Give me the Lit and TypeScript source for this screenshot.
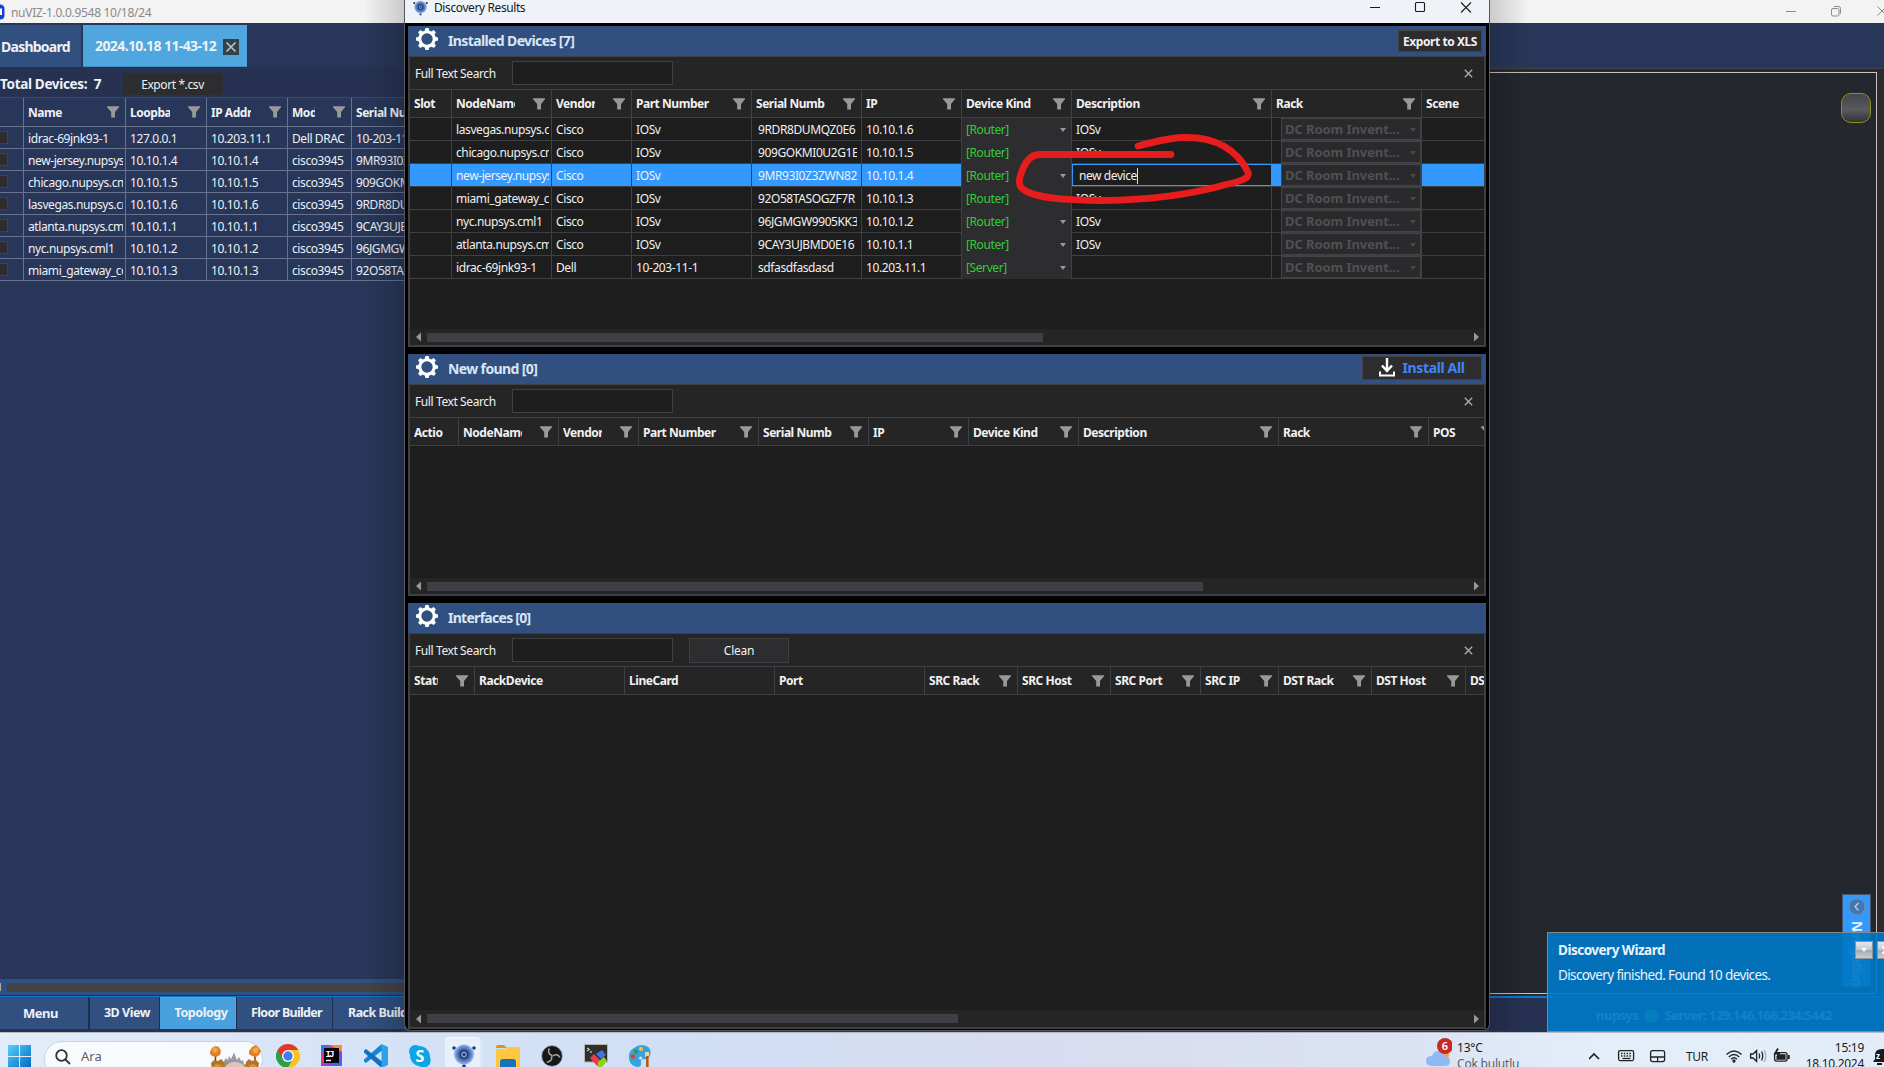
import { LitElement, html, css, svg, nothing } from "lit";
import { customElement, property } from "lit/decorators.js";
import { styleMap } from "lit/directives/style-map.js";
import { classMap } from "lit/directives/class-map.js";

type Col = { label: string; w: number; filter?: boolean };

const tracks = (cols: Col[]) =>
  styleMap({ gridTemplateColumns: cols.map((c) => `${c.w}px`).join(" ") });

const funnel = html`<svg class="funnel" width="12" height="12" viewBox="0 0 12 12">
  <path d="M0 .3H12V1.2L8 6V11.6H4.2V6L0 1.2Z" fill="#999"/></svg>`;

const headerCells = (cols: Col[]) => cols.map(
  (c) => html`<div class="hcell ${c.filter ? "" : "plain"}"><span class="hlabel">${c.label}</span>${c.filter ? funnel : nothing}</div>`
);

const gridCss = css`
  .hrow, .row { display: grid; }
  .hcell { display: flex; align-items: center; min-width: 0; box-sizing: border-box; border-right: 1px solid var(--line);
    padding: 0 6px 0 4px; font-weight: 700; font-size: 12px; }
  .hcell.plain { padding-right: 15px; }
  .hcell:last-child { border-right: 0; }
  .hlabel { flex: 1; min-width: 0; overflow: hidden; white-space: nowrap; margin-right: 18px; letter-spacing: -0.46px; }
  .hcell.plain .hlabel { margin-right: 0; }
  .funnel { flex: none; display: block; }
  .cell { box-sizing: border-box; border-right: 1px solid var(--line); min-width: 0; padding: 2px 2px 0 4px; display: flex; align-items: center; }
  .cell:last-child { border-right: 0; }
  .cell > span { overflow: hidden; white-space: nowrap; min-width: 0; letter-spacing: -0.4px; padding-right: 1px; }
`;

const LEFT_COLS: Col[] = [
  { label: "", w: 24 }, { label: "Name", w: 102, filter: true }, { label: "Loopback", w: 81, filter: true },
  { label: "IP Address", w: 81, filter: true }, { label: "Model", w: 64, filter: true }, { label: "Serial Number", w: 110 },
];
const LEFT_ROWS = [
  ["idrac-69jnk93-1", "127.0.0.1", "10.203.11.1", "Dell DRAC", "10-203-11-1"],
  ["new-jersey.nupsys.cml1", "10.10.1.4", "10.10.1.4", "cisco3945", "9MR93I0Z3ZWN82"],
  ["chicago.nupsys.cml1", "10.10.1.5", "10.10.1.5", "cisco3945", "909GOKMI0U2G1E"],
  ["lasvegas.nupsys.cml1", "10.10.1.6", "10.10.1.6", "cisco3945", "9RDR8DUMQZ0E6"],
  ["atlanta.nupsys.cml1", "10.10.1.1", "10.10.1.1", "cisco3945", "9CAY3UJBMD0E16"],
  ["nyc.nupsys.cml1", "10.10.1.2", "10.10.1.2", "cisco3945", "96JGMGW9905KK3"],
  ["miami_gateway_core", "10.10.1.3", "10.10.1.3", "cisco3945", "92O58TASOGZF7R"],
];

@customElement("nv-main-window")
class MainWindow extends LitElement {
  static styles = [gridCss, css`
    :host { display: flex; flex-direction: column; height: 1032px; background: #283759; color: #eef1f5; --line: #68728c; }
    .title { height: 23px; flex: none; background: #f3f3f3; display: flex; align-items: center; color: #8a8a8a; }
    .title .logo { display: block; width: 6px; height: 18px; margin-right: 5px; }
    .title .name { font-size: 12px; letter-spacing: -.3px; flex: 1; padding-top: 2px; }
    .title svg { display: block; }
    .body { flex: 1; min-height: 0; display: flex; }
    .left { width: 406px; flex: none; overflow: hidden; display: flex; flex-direction: column; }
    .tabs { display: flex; flex: none; height: 42px; padding: 2px 0 0; gap: 2px; font-size: 14px; font-weight: 700; letter-spacing: -.62px; }
    .tab { display: flex; align-items: center; background: #31507f; width: 81px; height: 42px; box-sizing: border-box; white-space: nowrap; padding: 2px 0 0 1px; letter-spacing: -.75px; }
    .tab.active { background: #50a6df; width: 164px; padding-left: 12px; gap: 7px; border-bottom: 1px solid #3f8fc7; letter-spacing: -.6px; }
    .tab.active span { flex: none; width: 121px; }
    .tools { flex: none; height: 31px; display: flex; align-items: center; background: #273253; font-weight: 700; font-size: 13.5px; border-bottom: 1px solid #46494f; box-sizing: border-box; padding-top: 4px; }
    .tools .total { width: 123px; white-space: pre; letter-spacing: -.32px; padding-top: 2px; }
    .tools .btn { background: #2d2d30; width: 100px; height: 22px; box-sizing: border-box; display: flex; align-items: center; justify-content: center; font-weight: 400; font-size: 12px; letter-spacing: -.4px; padding: 2px 1px 0 0; }
    .hrow { flex: none; height: 29px; border-bottom: 1px solid var(--line); box-sizing: border-box; }
    .hlabel { padding-top: 2px; }
    .row { flex: none; height: 22px; box-sizing: border-box; border-bottom: 1px solid var(--line); font-size: 12px; }
    .cell.check { padding: 0; }
    .box { width: 7px; height: 11px; background: #2d2d30; border: 1px solid #434346; border-left: 0; margin-bottom: 1px; }
    .fill { flex: 1; }
    .hscroll { height: 16px; background: #31507f; display: flex; align-items: center; gap: 6px; border-bottom: 1px solid #20304f; }
    .hscroll i { width: 1px; height: 8px; background: #aaa; }
    .hscroll b { flex: 1; height: 9px; background: #434346; }
    .nav { flex: none; border-top: 1px solid #0a7acc; height: 36px; display: flex; gap: 1px; background: #1f2f50; font-size: 12.5px; font-weight: 700; box-sizing: border-box; border-bottom: 3px solid #263355; letter-spacing: -.45px; }
    .nav div { flex: none; background: #31507f; display: flex; align-items: center; justify-content: center; box-sizing: border-box; white-space: nowrap; padding-bottom: 0; }
    .nav .menu { width: 88px; padding-right: 7px; margin-right: 1px; padding-top: 1px; font-size: 13px; }
    .nav .v3d { width: 69px; padding-left: 5px; }
    .nav .topo { width: 76px; background: #48a1dc; padding-left: 6px; }
    .nav .floor { width: 95px; padding-left: 4px; letter-spacing: -.7px; }
    .nav .rack { width: 90px; justify-content: flex-start; padding-left: 15px; letter-spacing: -.55px; }
    .right { margin-left: auto; width: 395px; display: flex; flex-direction: column; }
    .strip { height: 45px; }
    .scene { flex: 1; background: #2b2b2d; border-top: 1px solid #444448; padding: 3px 7px 2px 0; display: flex; }
    .canvas { flex: 1; background: #24272e; border: 1px solid #c4c2bf; border-left: 0; display: flex; flex-direction: column; align-items: flex-end; padding: 20px 5px 6px 0; justify-content: space-between; }
    .knob { width: 28px; height: 28px; border-radius: 10px; border: 1px solid #8f8f1c; background: linear-gradient(#434447, #5a5b60 55%, #323337); }
    .dock { width: 27px; height: 91px; background: #3399ff; border: 1px solid #46566b; display: flex; flex-direction: column; align-items: center; color: #e8f2ff; }
    .dock svg { margin-top: 3px; }
    .dock span { writing-mode: vertical-rl; font-size: 13.5px; font-weight: 700; margin-top: 6px; letter-spacing: -1px; line-height: 20px; }
    .status { height: 36px; border-top: 2px solid #0a7acc; background: #273253; display: flex; align-items: center; justify-content: flex-end; font-size: 13px; font-weight: 700; padding: 1px 52px 0 0; box-sizing: border-box; gap: 6px; letter-spacing: -.53px; }
    .dot { width: 14px; height: 14px; border-radius: 50%; background: #39c75a; }
  `];
  render() {
    return html`
      <div class="title">
        <svg class="logo" viewBox="0 0 6 18"><path d="M0 1.500C3 1.500 4.500 3 4.500 6v6c0 3-1.500 4.500-4.500 4.500" fill="#1443d8"/><path d="M0 5.500h2v6.500H0" fill="#fff"/></svg>
        <span class="name">nuVIZ-1.0.0.9548 10/18/24</span>
        <svg width="98" height="22" viewBox="1786 0 98 22" fill="none" stroke="#8a8a8a"><path d="M1786 10.500h10M1877.500 5.500l9 9M1877.500 14.500l9-9"/><rect x="1831.500" y="7.500" width="7.500" height="7.500" rx="1.500"/><path d="M1834 5.500h4.500a2 2 0 0 1 2 2V12.500"/></svg>
      </div>
      <div class="body">
        <div class="left">
          <div class="tabs">
            <div class="tab">Dashboard</div>
            <div class="tab active"><span>2024.10.18 11-43-12</span>
              <svg width="16" height="16" viewBox="0 0 16 16"><rect width="16" height="16" fill="#34404b"/><path d="M3.500 3.500l9 9M12.500 3.500l-9 9" stroke="#b9c0c6" stroke-width="1.700"/></svg>
            </div>
          </div>
          <div class="tools"><span class="total">Total Devices:  7</span><span class="btn">Export *.csv</span></div>
          <div class="hrow" style=${tracks(LEFT_COLS)}>${headerCells(LEFT_COLS)}</div>
          ${LEFT_ROWS.map((r) => html`<div class="row" style=${tracks(LEFT_COLS)}>
            <div class="cell check"><i class="box"></i></div>
            ${r.map((c) => html`<div class="cell"><span>${c}</span></div>`)}
          </div>`)}
          <div class="fill"></div>
          <div class="hscroll"><i></i><b></b></div>
          <div class="nav"><div class="menu">Menu</div><div class="v3d">3D View</div><div class="topo">Topology</div><div class="floor">Floor Builder</div><div class="rack">Rack Builder</div></div>
        </div>
        <div class="right">
          <div class="strip"></div>
          <div class="scene"><div class="canvas">
            <div class="knob"></div>
            <div class="dock">
              <svg width="18" height="18" viewBox="0 0 18 18"><circle cx="9" cy="9" r="8.300" fill="#4377b3" stroke="#7b8ca0"/><path d="M10.500 5.200L7 9l3.500 3.800" fill="none" stroke="#c8d4e2" stroke-width="1.300"/></svg>
              <span>Navigation</span>
            </div>
          </div></div>
          <div class="status"><span>nupsys</span><i class="dot"></i><span>Server: 129.146.166.234:5442</span></div>
        </div>
      </div>`;
  }
}

const f = (label: string, w: number): Col => ({ label, w, filter: true });
const p = (label: string, w: number): Col => ({ label, w });
const COLS1 = [p("Slot", 42), f("NodeName", 100), f("Vendor", 80), f("Part Number", 120), f("Serial Number", 110), f("IP", 100), f("Device Kind", 110), f("Description", 200), f("Rack", 150), p("Scene", 62)];
const COLS2 = [p("Action", 49), f("NodeName", 100), f("Vendor", 80), f("Part Number", 120), f("Serial Number", 110), f("IP", 100), f("Device Kind", 110), f("Description", 200), f("Rack", 150), f("POS", 70)];
const COLS3 = [f("Status", 65), p("RackDevice", 150), p("LineCard", 150), p("Port", 150), f("SRC Rack", 93), f("SRC Host", 93), f("SRC Port", 90), f("SRC IP", 78), f("DST Rack", 93), f("DST Host", 94), p("DST Port", 80)];

const DEVICES = [
  ["lasvegas.nupsys.cml1", "Cisco", "IOSv", "9RDR8DUMQZ0E6", "10.10.1.6", "[Router]", "IOSv"],
  ["chicago.nupsys.cml1", "Cisco", "IOSv", "909GOKMI0U2G1E", "10.10.1.5", "[Router]", "IOSv"],
  ["new-jersey.nupsys.cml1", "Cisco", "IOSv", "9MR93I0Z3ZWN82", "10.10.1.4", "[Router]", "new device"],
  ["miami_gateway_core", "Cisco", "IOSv", "92O58TASOGZF7R", "10.10.1.3", "[Router]", "IOSv"],
  ["nyc.nupsys.cml1", "Cisco", "IOSv", "96JGMGW9905KK3", "10.10.1.2", "[Router]", "IOSv"],
  ["atlanta.nupsys.cml1", "Cisco", "IOSv", "9CAY3UJBMD0E16", "10.10.1.1", "[Router]", "IOSv"],
  ["idrac-69jnk93-1", "Dell", "10-203-11-1", "sdfasdfasdasd", "10.203.11.1", "[Server]", ""],
];
const EDITED = 2;

@customElement("nv-panel")
class Panel extends LitElement {
  @property() heading = "";
  @property({ reflect: true }) kind = "";
  @property({ attribute: false }) cols: Col[] = [];
  @property({ attribute: false }) rows: string[][] = [];
  @property({ type: Number }) thumb = 0;

  static styles = [gridCss, css`
    :host { display: flex; flex-direction: column; width: 1078px; --line: #3f3f46; color: #f1f1f1; }
    .head { height: 30px; flex: none; background: #31507f; display: flex; align-items: center; padding: 0 4px 0 8px; color: #d9e6f4; font-weight: 700; font-size: 14px; letter-spacing: -.62px; }
    .head .gear { display: block; margin: -4px 10px 0 0; }
    .head .h { flex: 1; padding-top: 1px; }
    :host([kind="interfaces"]) .h { letter-spacing: -.72px; padding-top: 0; }
    .xls { box-sizing: border-box; width: 84px; height: 22px; border: 1px solid #434346; background: #2d2d30; color: #f1f1f1; font-size: 12px; display: flex; align-items: center; justify-content: center; white-space: nowrap; padding-top: 1px; letter-spacing: -.42px; }
    .inst { box-sizing: border-box; width: 120px; height: 24px; border: 1px solid #434346; background: #2d2d30; color: #3f86f4; font-size: 14px; display: flex; align-items: center; justify-content: center; gap: 7px; white-space: nowrap; margin-top: -2px; letter-spacing: -.35px; padding-top: 1px; }
    .inst svg { margin-top: -2px; }
    .frame { flex: 1; min-height: 0; display: flex; flex-direction: column; border: 2px solid #3f3f46; border-top-width: 1px; background: #1e1e1e; overflow: hidden; }
    .search { height: 32px; flex: none; background: #252526; display: flex; align-items: center; padding: 0 11px 0 5px; font-size: 12px; border-bottom: 1px solid var(--line); letter-spacing: -.4px; }
    .search .lbl { width: 97px; padding-top: 1px; }
    .input { width: 159px; height: 22px; border: 1px solid #3f3f46; background: #1e1e1e; }
    .clean { width: 98px; height: 22px; border: 1px solid #3f3f46; background: #2d2d30; display: flex; align-items: center; justify-content: center; margin-left: 16px; letter-spacing: -.25px; padding-top: 1px; }
    .x { margin-left: auto; }
    .hrow { flex: none; height: 28px; box-sizing: border-box; border-bottom: 1px solid var(--line); background: #252526; }
    :host([kind="found"]) .hlabel { padding-top: 2px; }
    .row { flex: none; height: 23px; box-sizing: border-box; border-bottom: 1px solid var(--line); font-size: 12px; }
    .row.sel { background: #3399ff; }
    .cell.serial { padding-left: 6px; padding-right: 4px; }
    .kind { background: #2d2d30; color: #32cd32; justify-content: space-between; padding-right: 5px; margin-bottom: -1px; border-right-color: #3f3f46; padding-top: 1px; }
    .rack { padding: 0 0 0 9px; }
    .combo { flex: 1; box-sizing: border-box; height: 22px; border: 1px solid #434346; background: #2a2a2c; color: #505053; font-weight: 700; font-size: 13px; display: flex; align-items: center; justify-content: space-between; padding: 1px 4px 0 3px; }
    .combo span { letter-spacing: -.08px; white-space: nowrap; }
    .edit { align-self: stretch; flex: 1; background: #1e1e1e; border: 1px solid #3399ff; display: flex; align-items: center; padding: 1px 0 0 6px; box-sizing: border-box; letter-spacing: -.42px; }
    .edit i { width: 1px; height: 16px; background: #ddd; }
    .cell.editing { padding: 0; border-right: 0; }
    .fill { flex: 1; }
    .hscroll { height: 16px; flex: none; background: #252526; display: flex; align-items: center; padding: 0 5px 0 6px; }
    :host([kind="interfaces"]) .hscroll { height: 17px; }
    .bar { height: 9px; background: #3f3f46; margin-left: 6px; }
    .hscroll svg { display: block; }
    .hscroll .r { margin-left: auto; }
  `];

  private caret(color: string) {
    return html`<svg width="6" height="4" viewBox="0 0 6 4"><path d="M0 0H6L3 4Z" fill=${color}/></svg>`;
  }
  private row(r: string[], i: number) {
    const sel = i === EDITED;
    return html`<div class=${classMap({ row: true, sel })} style=${tracks(this.cols)}>
      <div class="cell"></div>
      ${r.slice(0, 5).map((c, n) => html`<div class="cell ${n === 3 ? "serial" : ""}"><span>${c}</span></div>`)}
      <div class="cell kind"><span>${r[5]}</span>${this.caret("#999")}</div>
      ${sel ? html`<div class="cell editing"><div class="edit">${r[6]}<i></i></div></div>` : html`<div class="cell"><span>${r[6]}</span></div>`}
      <div class="cell rack"><div class="combo"><span>DC Room Invent...</span>${this.caret("#48484b")}</div></div>
      <div class="cell"></div>
    </div>`;
  }
  render() {
    const teeth = [0, 45, 90, 135, 180, 225, 270, 315];
    return html`
      <div class="head">
        <svg class="gear" width="22" height="22" viewBox="0 0 22 22"><circle cx="11" cy="11" r="7.200" fill="none" stroke="#fff" stroke-width="3"/>${teeth.map((a) => svg`<path d="M8.700 3L9.400 0H12.600L13.300 3Z" fill="#fff" transform="rotate(${a} 11 11)"/>`)}</svg>
        <span class="h">${this.heading}</span>
        ${this.kind === "installed" ? html`<div class="xls">Export to XLS</div>` : nothing}
        ${this.kind === "found" ? html`<div class="inst"><svg width="16" height="19" viewBox="0 0 16 19" fill="none" stroke="#fff"><path d="M8 0V12M3 7.500L8 13L13 7.500" stroke-width="2.400"/><path d="M1 13.500V17.500H15V13.500" stroke-width="2"/></svg>Install All</div>` : nothing}
      </div>
      <div class="frame">
        <div class="search"><span class="lbl">Full Text Search</span><div class="input"></div>
          ${this.kind === "interfaces" ? html`<div class="clean">Clean</div>` : nothing}
          <svg class="x" width="9" height="9" viewBox="0 0 9 9"><path d="M.8.8l7.400 7.400M8.200.8L.8 8.200" stroke="#aaa" stroke-width="1.400"/></svg></div>
        <div class="hrow" style=${tracks(this.cols)}>${headerCells(this.cols)}</div>
        ${this.rows.map((r, i) => this.row(r, i))}
        <div class="fill"></div>
        <div class="hscroll"><svg width="5" height="10" viewBox="0 0 5 10"><path d="M5 .5V9.500L0 5Z" fill="#999"/></svg>
          <div class="bar" style=${styleMap({ width: `${this.thumb}px` })}></div>
          <svg class="r" width="5" height="10" viewBox="0 0 5 10"><path d="M0 .5V9.500L5 5Z" fill="#999"/></svg></div>
      </div>`;
  }
}

const orb = svg`<circle cx="2" cy="4" r="1.800" fill="#22407f"/><circle cx="22" cy="4" r="1.800" fill="#22407f"/><circle cx="12" cy="22" r="1.800" fill="#22407f"/>
  <circle cx="12" cy="10.500" r="10" fill="#86abea"/><circle cx="12" cy="10.500" r="8.200" fill="#6285c6"/><circle cx="12" cy="10.500" r="6" fill="#3a5a98"/><circle cx="12" cy="10.500" r="4" fill="#233d73"/><circle cx="12" cy="10.500" r="2.300" fill="#27457f" stroke="#a9c6f5" stroke-width="1"/>`;

@customElement("nv-dialog")
class Dialog extends LitElement {
  static styles = css`
    :host { display: flex; flex-direction: column; width: 1086px; height: 1031px; box-sizing: border-box; border: 1px solid #55575c; border-top: 0; border-radius: 0 0 7px 7px; background: #000; overflow: hidden; }
    .title { height: 23px; flex: none; background: #eff3f7; display: flex; align-items: center; color: #1a1a1a; font-size: 12px; letter-spacing: -.4px; padding-left: 8px; }
    .title .ico { display: block; margin-right: 6px; margin-top: -7px; }
    .title span { flex: 1; margin-top: -7px; }
    .stack { display: flex; flex-direction: column; padding: 3px 0 0 3px; gap: 7px; }
    .a { height: 321px; } .b { height: 242px; } .c { height: 426px; }
  `;
  render() {
    return html`
      <div class="title">
        <svg class="ico" width="15" height="16" viewBox="0 0 24 24">${orb}</svg>
        <span>Discovery Results</span>
        <svg width="119" height="23" viewBox="1370 0 119 23" fill="none" stroke="#1a1a1a" stroke-width="1.100"><path d="M1370 7.500h10M1461 2.500l10 10M1461 12.500l10-10"/><rect x="1415.500" y="2.500" width="9" height="9" rx="1"/></svg>
      </div>
      <div class="stack">
        <nv-panel class="a" kind="installed" heading="Installed Devices [7]" .cols=${COLS1} .rows=${DEVICES} thumb="616"></nv-panel>
        <nv-panel class="b" kind="found" heading="New found [0]" .cols=${COLS2} thumb="776"></nv-panel>
        <nv-panel class="c" kind="interfaces" heading="Interfaces [0]" .cols=${COLS3} thumb="531"></nv-panel>
      </div>`;
  }
}

@customElement("nv-toast")
class Toast extends LitElement {
  static styles = css`
    :host { display: flex; box-sizing: border-box; width: 350px; height: 100px; border: 1px solid #7d8790; border-right: 0; background: rgba(0, 119, 198, .92); color: #eaf3fb; padding: 8px 0 0 10px; }
    .text { flex: 1; display: flex; flex-direction: column; gap: 6px; font-size: 13.5px; line-height: 19px; white-space: nowrap; letter-spacing: -.62px; }
    .text b { font-weight: 700; letter-spacing: -.5px; }
    .btns { display: flex; gap: 4px; width: 42px; }
    .btns i { flex: none; width: 16px; height: 16px; border: 1px solid #8c9399; background: linear-gradient(#e4e8ec, #c2c8cf 50%, #a3acb5 52%, #c9ced3); display: flex; align-items: center; justify-content: center; }
  `;
  render() {
    return html`<div class="text"><b>Discovery Wizard</b><span>Discovery finished. Found 10 devices.</span></div>
      <div class="btns"><i><svg width="6" height="4"><path d="M0 0H6L3 4Z" fill="#fff"/></svg></i><i><svg width="8" height="8"><path d="M0 0L8 8M8 0L0 8" stroke="#fff" stroke-width="2"/></svg></i></div>`;
  }
}

@customElement("nv-taskbar")
class Taskbar extends LitElement {
  static styles = css`
    :host { display: flex; height: 35px; box-sizing: border-box; border-top: 1px solid #b4b8c0; overflow: hidden; color: #1b1b1b; align-items: flex-start;
      background: linear-gradient(90deg, #e2edf9, #d5e2f6 22%, #d0dff5 36%, #d8dcf0 55%, #dbe3f3 75%, #e4eef9 85%, #e3edf8); }
    svg { display: block; flex: none; }
    .win { margin: 12px 0 0 8px; }
    .search { margin: 8px 0 0 13px; width: 219px; height: 36px; box-sizing: border-box; border: 1px solid #c9d3df; border-radius: 18px; background: #f8fbfe; display: flex; flex: none; font-size: 13px; color: #5a5d61; }
    .search .m { margin: 7px 10px 0 10px; }
    .search span { flex: 1; margin-top: 6px; }
    .search .trees { margin: 3px 1px 0 0; }
    .apps { display: flex; margin: 4px 0 0 3px; height: 44px; }
    .app { width: 44px; box-sizing: border-box; display: flex; justify-content: center; padding-top: 7px; flex: none; }
    .app.on { background: #eaf0fb; border-radius: 4px; width: 35px; margin: 0 6px 0 3px; box-shadow: 3px 0 0 -1px #dfe7f5; border-top: 1px solid #f4f7fc; padding: 6px 0 0 3px; }
    .tray { margin-left: auto; display: flex; align-items: flex-start; font-size: 12px; line-height: 16px; }
    .weather { display: flex; gap: 5px; }
    .weather div { width: 132px; margin-top: 7px; letter-spacing: -.2px; }
    .weather small { font-size: 12px; display: block; color: #5d6066; }
    .lang { font-size: 12px; width: 40px; margin-top: 16px; letter-spacing: -.4px; }
    .clock { text-align: right; width: 74px; margin-top: 7px; letter-spacing: -.3px; }
    .bell { margin-left: 8px; }
  `;
  render() {
    return html`
      <svg class="win" width="23" height="23" viewBox="0 0 23 23"><defs><linearGradient id="w" x1="0" y1="0" x2="1" y2="1"><stop offset="0" stop-color="#58d0fb"/><stop offset="1" stop-color="#0067c4"/></linearGradient></defs><path d="M0 0h11v11H0zM12 0h11v11H12zM0 12h11v11H0zM12 12h11v11H12z" fill="url(#w)"/></svg>
      <div class="search">
        <svg class="m" width="16" height="16" viewBox="0 0 16 16" fill="none" stroke="#333" stroke-width="1.800"><circle cx="6.500" cy="6.500" r="5.300"/><path d="M10.500 10.500L15 15"/></svg>
        <span>Ara</span>
        <svg class="trees" width="52" height="24" viewBox="0 0 52 24"><path d="M15 24V16l2-3 2 2 1-4 2 3 2-4 1-3 1 3 2 5 2-3 2 4 2-1 2 9Z" fill="#9d97a3"/><path d="M13 21l5-4 4 2 6-2 6 3 3-1v6H13Z" fill="#b08a55"/><path d="M14 25Q18 17 26 17T38 25Z" fill="#dfc5b9"/><path d="M6.500 24V8M46 24V8" stroke="#6b3f1b" stroke-width="1.500"/><path d="M1 7l2-4 3-2 4 1 2 4-1 4-4 2-4-1-2-2ZM40 6l3-4 4-2 3 3 2 3-2 4-3 2-4-1-3-2Z" fill="#dd8228"/><path d="M3 5l3-3 3 2-1 3-3 1ZM43 5l4-3 3 2-2 4-3 0Z" fill="#f2a844"/><path d="M2 18l3-3 4 1 3-2 3 3 1 7H3ZM50 18l-3-3-4 1-3-2-3 3-1 7h13Z" fill="#b9702a"/><path d="M4 22l3-3 4 1 5 1v4H4ZM48 22l-3-3-4 1-5 1v4h12Z" fill="#d39a34"/><path d="M9 24l3-3 5 1v3ZM43 24l-3-3-5 1v3Z" fill="#6d7330"/></svg>
      </div>
      <div class="apps">
        <div class="app"><svg width="24" height="24" viewBox="0 0 24 24"><path d="M12 12L1.600 6A12 12 0 0 0 12 24L17.200 15Z" fill="#2aa147"/><path d="M17.200 15L12 24A12 12 0 0 0 22.400 6H12Z" fill="#fcc31e"/><path d="M1.600 6A12 12 0 0 1 22.400 6H12L6.800 15Z" fill="#e0372b"/><circle cx="12" cy="12" r="6" fill="#fff"/><circle cx="12" cy="12" r="4.700" fill="#3f7ff0"/></svg></div>
        <div class="app"><svg width="24" height="24" viewBox="0 0 24 24"><defs><linearGradient id="j" x1="0" y1="0" x2="1" y2="1"><stop offset="0" stop-color="#2f7df6"/><stop offset=".35" stop-color="#f0307c"/><stop offset=".65" stop-color="#8a3df0"/><stop offset="1" stop-color="#1d7cf2"/></linearGradient></defs><path d="M1 1H22V22H1Z" fill="url(#j)"/><path d="M1 9L9 1H1Z" fill="#2f7df6"/><path d="M10 1H22V8Z" fill="#fb8a3a"/><path d="M4 4H19V19H4Z" fill="#07030a"/><text x="5.500" y="12.500" font-size="9" font-weight="700" fill="#fff" font-family="Liberation Mono, monospace" textLength="9">IJ</text><path d="M6 16.500h5" stroke="#fff" stroke-width="1.400"/></svg></div>
        <div class="app"><svg width="24" height="24" viewBox="0 0 24 24"><path d="M17.500 0L24 3V21L17.500 24Z" fill="#29a3ee"/><path d="M17.500 0L0 15.500V17.500L2 19L18 6.500Z" fill="#1787d3"/><path d="M17.500 24L0 8.500V6.500L2 5L18 17.500Z" fill="#0f72bd"/></svg></div>
        <div class="app"><svg width="24" height="24" viewBox="0 0 24 24"><path d="M2 4Q5-1 11 2A11 11 0 0 1 22 13Q24 19 20 22T12 22.500A11 11 0 0 1 2 11Q0 7 2 4Z" fill="#0ea5e8"/><text x="12" y="17.500" text-anchor="middle" font-size="16" font-weight="700" fill="#fff" font-family="Noto Sans, sans-serif">S</text></svg></div>
        <div class="app on"><svg width="24" height="24" viewBox="0 0 24 24">${orb}</svg></div>
        <div class="app"><svg width="24" height="24" viewBox="0 0 24 24"><path d="M0 3Q0 1 2 1H8L11 4H0Z" fill="#d99a12"/><path d="M0 5H9L11 3H22Q24 3 24 5V24H0Z" fill="#fdc83f"/><path d="M4 24V18Q4 15 7 15H17Q20 15 20 18V24Z" fill="#1672bf"/></svg></div>
        <div class="app"><svg width="24" height="24" viewBox="0 0 24 24"><circle cx="12" cy="12" r="10.200" fill="#17171a" stroke="#6e6e72" stroke-width=".7"/><g fill="none" stroke="#a9a9ad" stroke-width="1.500"><path d="M12 11.500C8.500 10.500 7.500 7 9.500 4.500"/><path d="M12 11.500C8.500 10.500 7.500 7 9.500 4.500" transform="rotate(120 12 12)"/><path d="M12 11.500C8.500 10.500 7.500 7 9.500 4.500" transform="rotate(240 12 12)"/></g></svg></div>
        <div class="app"><svg width="24" height="24" viewBox="0 0 24 24"><path d="M.5.5H23.500V18H.5Z" fill="#2e2f30" stroke="#b7b5a4"/><path d="M3 4l2.500 1.500L3 7M6 8h2" stroke="#fff" fill="none"/><path d="M6 14L10 10L18 18L13 22Z" fill="#e83c52"/><path d="M12 10L18 6L22 11L17 15Z" fill="#3f76e0"/><path d="M14 18L20 13L23 17L18 23H14Z" fill="#8dd21c"/></svg></div>
        <div class="app"><svg width="24" height="24" viewBox="0 0 24 24"><path d="M15 1Q23 2 22.500 9T16 15Q12 15 13 19T9 23Q2 22 1 14.500T6 4Q10 .5 15 1Z" fill="#36a3e0"/><circle cx="8" cy="7.500" r="2.200" fill="#2f9b3b"/><circle cx="13" cy="5" r="2" fill="#f5c22e"/><circle cx="5" cy="12.500" r="2.200" fill="#d9472b"/><circle cx="12.500" cy="14" r="1.500" fill="#e4f2fb"/><path d="M17 8h4v5h-4z" fill="#e9d3a5"/><path d="M18 12h2.600v12H18z" fill="#a9601c"/></svg></div>
      </div>
      <div class="tray">
        <div class="weather"><svg width="28" height="34" viewBox="1423 1033 28 34"><circle cx="1442" cy="1055" r="6" fill="#f2a03a"/><path d="M1430 1066Q1425 1065 1425 1060.500T1431 1056Q1433 1050.500 1438 1051T1444 1056.500Q1449 1057 1449 1061.500T1444 1066Z" fill="#8fb9f2"/><circle cx="1444" cy="1046" r="8" fill="#c52b22"/><text x="1444" y="1050" text-anchor="middle" font-size="11" font-weight="600" fill="#fff" font-family="Noto Sans, sans-serif">6</text></svg>
          <div>13°C<small>Çok bulutlu</small></div></div>
        <svg width="97" height="34" viewBox="1589 1033 97 34" fill="none" stroke="#222" stroke-width="1.300"><path d="M1589 1059l5-5 5 5" stroke-width="1.700"/><rect x="1618.600" y="1050.600" width="15" height="10" rx="1.500"/><path d="M1621 1053.500h10.500M1621 1056h10.500" stroke-dasharray="1.500 1.300"/><path d="M1622.500 1058.500h8"/><rect x="1650.600" y="1050.600" width="14" height="11" rx="2"/><path d="M1650.600 1057h14M1657.600 1057v4.500"/></svg>
        <span class="lang">TUR</span>
        <svg width="64" height="34" viewBox="1726 1033 64 34" fill="none" stroke="#222" stroke-width="1.300"><path d="M1726.500 1054.500q7.500-7 15 0M1728.800 1057q5.200-5 10.400 0M1731 1059.300q3-3 6 0"/><circle cx="1734" cy="1061" r="1" fill="#222"/><path d="M1750.600 1054h2.500l3.500-3.500v11l-3.500-3.500h-2.500ZM1759 1053.500q1.500 2.300 0 5M1761.500 1051.500q2.500 4.500 0 9"/><path d="M1764 1050q3.500 6 0 12" stroke="#aab"/><rect x="1774.600" y="1052.600" width="12.500" height="8.500" rx="2"/><path d="M1778 1055h7v4h-8Z" fill="#222"/><path d="M1788.700 1055v4" stroke-width="2"/><path d="M1778 1048.500l-3 5h4l-2 4" stroke-width="1.800"/></svg>
        <div class="clock">15:19<br>18.10.2024</div>
        <svg class="bell" width="12" height="34" viewBox="1872 1033 12 34"><path d="M1873 1062l2-3v-4q0-6 7-6h2v13Z" fill="#1b1b1b"/><text x="1876" y="1059" font-size="8" font-weight="700" fill="#fff" font-family="Noto Sans, sans-serif">z</text><path d="M1877 1064h5" stroke="#1b1b1b" stroke-width="2"/></svg>
      </div>`;
  }
}

@customElement("app-root")
class AppRoot extends LitElement {
  static styles = css`
    :host { display: flex; flex-direction: column; position: relative; width: 1884px; height: 1067px; overflow: hidden; font-family: "Noto Sans", "Open Sans", sans-serif; line-height: 1.3; }
    .shade { position: absolute; top: 0; height: 1031px; width: 40px; }
    .shade.l { left: 364px; background: linear-gradient(90deg, transparent, rgba(0, 0, 0, .17)); }
    .shade.r { left: 1489px; background: linear-gradient(270deg, transparent, rgba(0, 0, 0, .17)); }
    nv-dialog { position: absolute; left: 404px; top: 0; }
    nv-toast { position: absolute; left: 1547px; top: 932px; }
    .ink { position: absolute; left: 1010px; top: 125px; }
  `;
  render() {
    return html`
      <nv-main-window></nv-main-window>
      <nv-taskbar></nv-taskbar>
      <div class="shade l"></div><div class="shade r"></div>
      <nv-dialog></nv-dialog>
      <nv-toast></nv-toast>
      <svg class="ink" width="250" height="85" viewBox="1010 125 250 85" fill="none" stroke="#e71c1c" stroke-width="6.800" stroke-linecap="round" stroke-linejoin="round"><path d="M1138 146C1155 142 1168 137.500 1185 137.500C1216 137 1237 150 1248 172C1250 178 1242 181 1228 184C1190 195 1150 200 1103 200.500C1070 200 1045 199 1030 193C1020 189 1018 185 1020 177C1023 166 1029 155 1039 154.500H1171"/></svg>`;
  }
}
